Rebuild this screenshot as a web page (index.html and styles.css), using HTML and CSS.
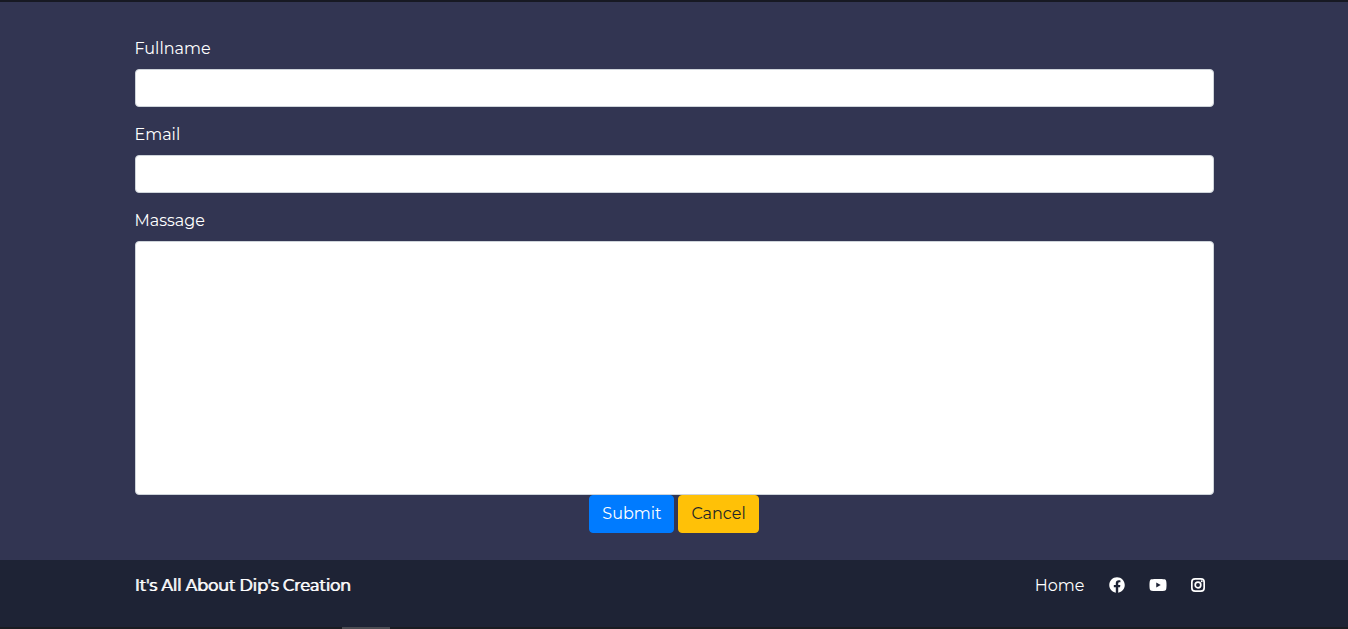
FILE: index.html
```html
<!DOCTYPE html>
<html lang="en">
<head>
<meta charset="utf-8">
<meta name="viewport" content="width=device-width, initial-scale=1">
<title>Contact</title>
<link rel="stylesheet" href="styles.css">
</head>
<body>
<main class="contact">
  <form class="container">
    <div class="field">
      <label for="fullname">Fullname</label>
      <input class="control" type="text" id="fullname" name="fullname">
    </div>
    <div class="field">
      <label for="email">Email</label>
      <input class="control" type="email" id="email" name="email">
    </div>
    <div class="field">
      <label for="message">Massage</label>
      <textarea class="control" id="message" name="message" rows="10"></textarea>
    </div>
    <div class="actions">
      <button class="btn btn-submit" type="submit">Submit</button>
      <button class="btn btn-cancel" type="reset">Cancel</button>
    </div>
  </form>
</main>
<footer class="footer">
  <div class="container footer-inner">
    <p class="brand">It's All About Dip's Creation</p>
    <nav class="links">
      <a href="#home">Home</a>
      <a href="#facebook" aria-label="Facebook"><svg width="16" height="16" viewBox="0 0 512 512"><path fill="currentColor" d="M504 256C504 119 393 8 256 8S8 119 8 256c0 123.780 90.690 226.380 209.250 245V327.690h-63V256h63v-54.640c0-62.150 37-96.480 93.670-96.480 27.140 0 55.520 4.840 55.520 4.840v61h-31.280c-30.800 0-40.410 19.120-40.410 38.730V256h68.780l-11 71.690h-57.780V501C413.310 482.380 504 379.780 504 256z"/></svg></a>
      <a href="#youtube" aria-label="YouTube"><svg width="18" height="16" viewBox="0 0 576 512"><path fill="currentColor" d="M549.655 124.083c-6.281-23.650-24.787-42.276-48.284-48.597C458.781 64 288 64 288 64S117.220 64 74.629 75.486c-23.497 6.322-42.003 24.947-48.284 48.597-11.412 42.867-11.412 132.305-11.412 132.305s0 89.438 11.412 132.305c6.281 23.650 24.787 41.500 48.284 47.821C117.220 448 288 448 288 448s170.780 0 213.371-11.486c23.497-6.321 42.003-24.171 48.284-47.821 11.412-42.867 11.412-132.305 11.412-132.305s0-89.438-11.412-132.305zM232 338V174l143 82z"/></svg></a>
      <a href="#instagram" aria-label="Instagram"><svg width="14" height="16" viewBox="0 0 448 512"><g fill="none" stroke="currentColor" stroke-width="54"><rect x="27" y="59" width="394" height="394" rx="104"/><circle cx="224" cy="256" r="90"/></g><circle cx="343" cy="137" r="30" fill="currentColor"/></svg></a>
    </nav>
  </div>
  <div class="scroll-strip"><div class="scroll-thumb"></div></div>
</footer>
</body>
</html>
```
FILE: styles.css
```css
* {
  box-sizing: border-box;
}

body {
  display: flex;
  flex-direction: column;
  min-height: 100vh;
  margin: 0;
  background: #1e2335;
  color: #fff;
  font-family: Montserrat, Inter, sans-serif;
  font-size: 16px;
  line-height: 24px;
}

.contact {
  padding: 35px 15px 27px;
  border-top: 2px solid #171923;
  background: #323552;
}

.container {
  width: 100%;
  max-width: 1079px;
  margin: 0 auto;
}

.field {
  margin-bottom: 16px;
}

.field:has(textarea) {
  margin-bottom: 0;
}

label {
  display: block;
  margin-bottom: 8px;
}

.control {
  display: block;
  width: 100%;
  height: 38px;
  padding: 6px 12px;
  border: 1px solid #ced4da;
  border-radius: 4px;
  background: #fff;
  color: #495057;
  font: inherit;
}

textarea.control {
  height: 254px;
  resize: none;
}

.actions {
  display: flex;
  justify-content: center;
  gap: 4px;
}

.btn {
  padding: 6px 12px;
  border: 1px solid;
  border-radius: 4px;
  font: inherit;
}

.btn-submit {
  border-color: #007bff;
  background: #007bff;
  color: #fff;
}

.btn-cancel {
  border-color: #ffc107;
  background: #ffc107;
  color: #212529;
}

.footer {
  display: flex;
  flex: 1;
  flex-direction: column;
  justify-content: space-between;
  padding: 14px 15px 0;
}

.footer-inner {
  display: flex;
  justify-content: space-between;
  align-items: center;
}

.brand {
  margin: 0;
  text-shadow: 1px 0 currentColor;
}

.links {
  display: flex;
  align-items: center;
  gap: 24px;
  padding-right: 9px;
}

.links a {
  color: inherit;
  text-decoration: none;
}

.links svg {
  display: block;
  margin-bottom: 2px;
}

.scroll-strip {
  height: 2px;
  margin: 0 -15px;
  padding-left: 342px;
  background: #1a1c22;
}

.scroll-thumb {
  width: 48px;
  height: 2px;
  background: #4b4c52;
}
```
